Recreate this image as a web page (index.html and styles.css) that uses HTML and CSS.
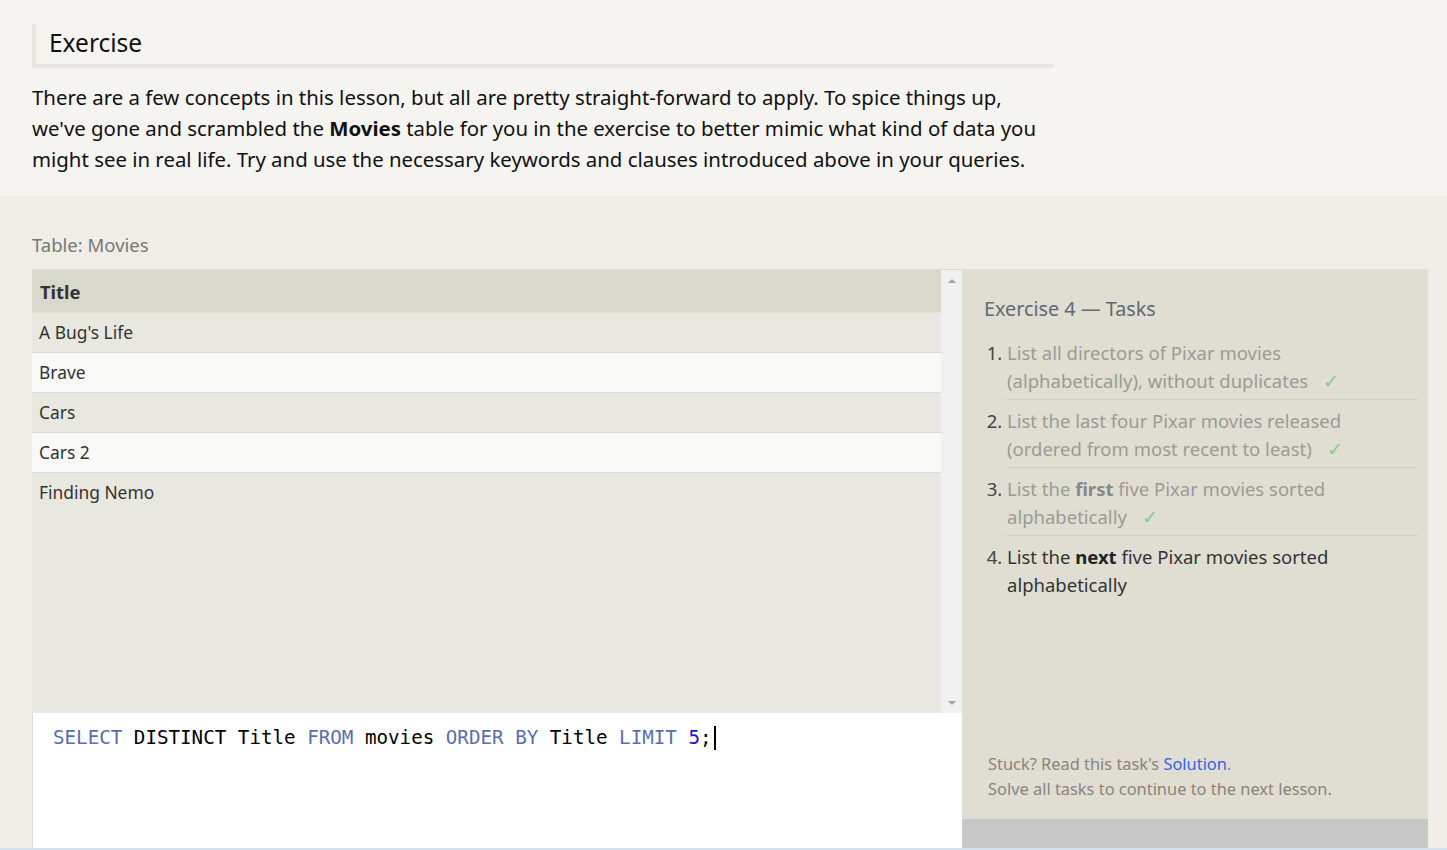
FILE: index.html
```html
<!DOCTYPE html>
<html lang="en">
<head>
<meta charset="utf-8">
<title>Exercise</title>
<link rel="stylesheet" href="styles.css">
</head>
<body>
<section class="intro">
  <h2 class="intro-title">Exercise</h2>
  <p class="intro-text">There are a few concepts in this lesson, but all are pretty straight-forward to apply. To spice things up, we've gone and scrambled the <strong>Movies</strong> table for you in the exercise to better mimic what kind of data you might see in real life. Try and use the necessary keywords and clauses introduced above in your queries.</p>
</section>

<section class="workspace">
  <div class="table-label">Table: Movies</div>
  <div class="work-row">
    <div class="left-col">
      <div class="table-area">
        <div class="table-scroll">
          <table class="data-table">
            <thead><tr><th>Title</th></tr></thead>
            <tbody>
              <tr><td>A Bug's Life</td></tr>
              <tr><td>Brave</td></tr>
              <tr><td>Cars</td></tr>
              <tr><td>Cars 2</td></tr>
              <tr><td>Finding Nemo</td></tr>
            </tbody>
          </table>
        </div>
        <div class="scrollbar">
          <span class="arrow arrow-up"></span>
          <span class="arrow arrow-down"></span>
        </div>
      </div>
      <div class="editor">
        <div class="code"><span class="kw">SELECT</span> DISTINCT Title <span class="kw">FROM</span> movies <span class="kw">ORDER</span> <span class="kw">BY</span> Title <span class="kw">LIMIT</span> <span class="num">5</span>;<span class="cursor"></span></div>
      </div>
    </div>
    <aside class="tasks">
      <h3 class="tasks-title">Exercise 4 — Tasks</h3>
      <ol class="task-list">
        <li class="done">List all directors of Pixar movies (alphabetically), without duplicates <span class="check">✓</span></li>
        <li class="done">List the last four Pixar movies released (ordered from most recent to least) <span class="check">✓</span></li>
        <li class="done">List the <strong>first</strong> five Pixar movies sorted alphabetically <span class="check">✓</span></li>
        <li class="current">List the <strong>next</strong> five Pixar movies sorted alphabetically</li>
      </ol>
      <div class="tasks-footer">
        <div>Stuck? Read this task's <a class="solution" href="#">Solution</a>.</div>
        <div>Solve all tasks to continue to the next lesson.</div>
      </div>
      <div class="tasks-bar"></div>
    </aside>
  </div>
</section>
<div class="bottom-line"></div>
</body>
</html>
```

FILE: styles.css
```css
html, body {
  margin: 0;
  padding: 0;
}

body {
  font-family: "Noto Sans", "Open Sans", sans-serif;
  background: #efede6;
  color: #111;
  overflow: hidden;
}

.intro {
  background: #f5f4f0;
  padding: 24px 32px 21px;
}

.intro-title {
  margin: 0;
  width: 1005px;
  border-left: 4px solid #e8e7df;
  border-bottom: 4px solid #e8e7df;
  padding: 3px 0 5px 13px;
  font-size: 24.5px;
  line-height: 32px;
  font-weight: 400;
  color: #111;
}

.intro-text {
  margin: 14px 0 0;
  width: 1022px;
  font-size: 20.4px;
  line-height: 31px;
  color: #111;
}

.intro-text strong {
  font-weight: 700;
}

.workspace {
  padding: 37px 19px 0 32px;
  border-top-left-radius: 4px;
}

.table-label {
  font-size: 18.5px;
  line-height: 24px;
  color: #777;
  margin-bottom: 12px;
}

.work-row {
  display: flex;
  height: 579px;
}

.left-col {
  width: 930px;
  display: flex;
  flex-direction: column;
}

.table-area {
  height: 444px;
  display: flex;
  background: #e9e8e0;
  border-top: 1px solid #dcdbd3;
  box-sizing: border-box;
}

.table-scroll {
  flex: 1;
}

.data-table {
  width: 100%;
  border-collapse: collapse;
}

.data-table th {
  text-align: left;
  background: #d9d8cc;
  color: #333;
  font-size: 18.4px;
  font-weight: 700;
  height: 42px;
  padding: 2px 8px 0;
  box-sizing: border-box;
  border-bottom: 1px solid #e2e1d9;
}

.data-table td {
  height: 40px;
  padding: 0 7px;
  box-sizing: border-box;
  font-size: 17.4px;
  color: #333;
  border-bottom: 1px solid #dcdbd3;
}

.data-table tbody tr:nth-child(odd) td {
  background: #e9e8e0;
}

.data-table tbody tr:nth-child(even) td {
  background: #f8f8f7;
}

.data-table tbody tr:last-child td {
  border-bottom: none;
}

.scrollbar {
  width: 21px;
  background: #f0f0f0;
  display: flex;
  flex-direction: column;
  justify-content: space-between;
  align-items: center;
  padding: 9px 0 8px;
  box-sizing: border-box;
}

.arrow {
  width: 0;
  height: 0;
  border-left: 4px solid transparent;
  border-right: 4px solid transparent;
}

.arrow-up {
  border-bottom: 4px solid #a3a3a3;
}

.arrow-down {
  border-top: 4px solid #a3a3a3;
}

.editor {
  flex: 1;
  background: #fff;
  border-left: 1px solid #dedbd2;
  padding: 13px 0 0 20px;
}

.code {
  font-family: "DejaVu Sans Mono", "Liberation Mono", monospace;
  font-size: 19.2px;
  line-height: 24px;
  color: #000;
  white-space: pre;
}

.kw {
  color: #5a6eab;
}

.num {
  color: #2b10d0;
}

.cursor {
  display: inline-block;
  width: 0;
  height: 24px;
  border-left: 2px solid #000;
  vertical-align: top;
  margin-left: 2px;
}

.tasks {
  width: 466px;
  background: #e0ded3;
  display: flex;
  flex-direction: column;
}

.tasks-title {
  margin: 0;
  padding: 27px 0 0 22px;
  font-size: 19.8px;
  line-height: 26px;
  font-weight: 400;
  color: #5f6970;
}

.task-list {
  margin: 10px 10px 0 45px;
  padding: 0;
  font-size: 18.5px;
  line-height: 28px;
}

.task-list li {
  padding: 7px 20px 4px 0;
  border-bottom: 1px solid #d2d0c5;
}

.task-list li:last-child {
  border-bottom: none;
}

.task-list li::marker {
  color: #444;
}

.task-list li.done {
  color: #9b9a94;
}

.task-list li.done strong {
  color: #888;
}

.task-list li.current {
  color: #333;
}

.task-list li.current strong {
  color: #222;
}

.check {
  font-family: "DejaVu Sans", sans-serif;
  font-size: 19px;
  font-weight: 300;
  color: #80cf8c;
  margin-left: 10px;
}

.tasks-footer {
  margin-top: auto;
  padding: 0 0 18px 26px;
  font-size: 16.4px;
  line-height: 25px;
  color: #8a837b;
}

.solution {
  color: #3465e0;
  text-decoration: none;
}

.tasks-bar {
  height: 29px;
  background: #c7c7c7;
}

.bottom-line {
  height: 2px;
  background: #d6e1ee;
}
```
